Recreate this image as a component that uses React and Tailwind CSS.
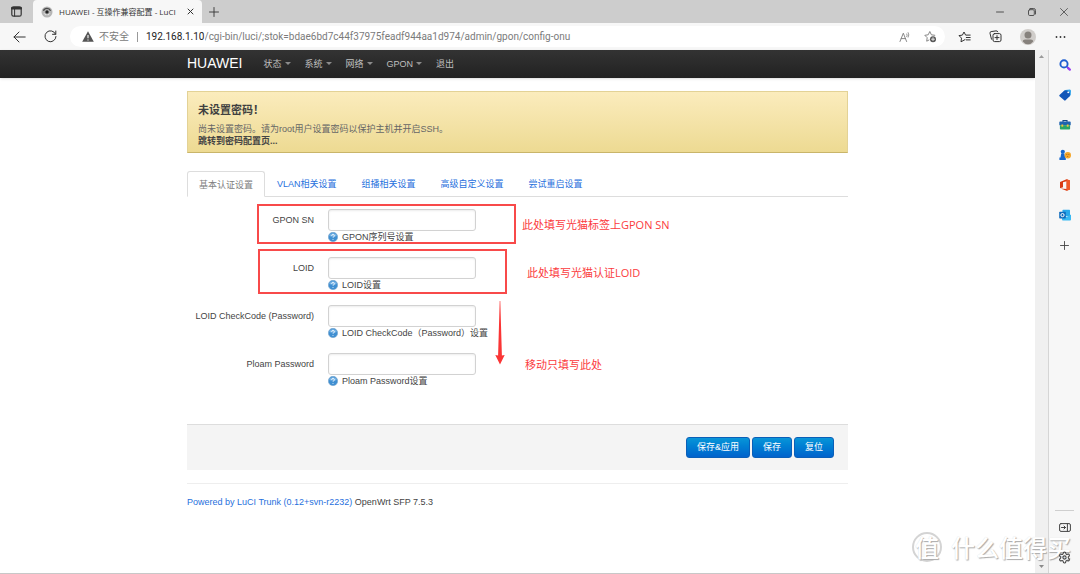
import { useState } from "react";

const NAV_ITEMS = [
  { label: "状态", dropdown: true },
  { label: "系统", dropdown: true },
  { label: "网络", dropdown: true },
  { label: "GPON", dropdown: true },
  { label: "退出", dropdown: false },
];

const TABS = ["基本认证设置", "VLAN相关设置", "组播相关设置", "高级自定义设置", "尝试重启设置"];

const FIELDS = [
  { id: "gpon-sn", label: "GPON SN", help: "GPON序列号设置" },
  { id: "loid", label: "LOID", help: "LOID设置" },
  { id: "loid-checkcode", label: "LOID CheckCode (Password)", help: "LOID CheckCode（Password）设置" },
  { id: "ploam-password", label: "Ploam Password", help: "Ploam Password设置" },
];

const SAVE_BTN =
  "h-[21px] rounded-[3px] border border-[#0a5fb8] bg-linear-to-b from-[#0a95d8] to-[#0262cc] px-[10px] text-[9px] leading-none text-white";

const STROKE = { fill: "none", stroke: "currentColor", strokeLinecap: "round", strokeLinejoin: "round" };

function TabBar() {
  return (
    <div className="flex h-[23px] items-end bg-[#cdcdcd] text-[#333]">
      <button aria-label="标签页操作" className="flex h-full w-[33px] items-center justify-center">
        <svg width="11" height="11" viewBox="0 0 11 11" {...STROKE}>
          <rect x="0.8" y="0.8" width="9.4" height="9.4" rx="1.8" strokeWidth="1.2" />
          <path d="M1 2.3h9" strokeWidth="2.4" />
          <path d="M3.6 3v7" strokeWidth="1" />
        </svg>
      </button>
      <div className="flex h-full w-[169px] items-center rounded-t-[4px] bg-[#f7f7f7] px-2">
        <svg width="12" height="12" viewBox="0 0 12 12" className="mr-[6px] shrink-0">
          <circle cx="6" cy="6" r="5.5" fill="#b5b5b5" />
          <path d="M2.4 4.8a3.9 3.9 0 0 1 7.2 0" fill="none" stroke="#4a4a4a" strokeWidth="1.3" />
          <circle cx="6" cy="6" r="1.7" fill="#222" />
          <path d="M6 7v3" stroke="#777" strokeWidth="1" />
          <path d="M3.2 7.4a3.2 3.2 0 0 0 5.6 0" fill="none" stroke="#eee" strokeWidth="1" />
        </svg>
        <span className="flex-1 whitespace-nowrap text-[8px]">HUAWEI - 互操作兼容配置 - LuCI</span>
        <button aria-label="关闭标签页">
          <svg width="7" height="7" viewBox="0 0 7 7" {...STROKE}>
            <path d="M1 1l5 5M6 1L1 6" strokeWidth="1" />
          </svg>
        </button>
      </div>
      <button aria-label="新建标签页" className="flex h-full w-6 items-center justify-center">
        <svg width="10" height="10" viewBox="0 0 10 10" {...STROKE}>
          <path d="M5 0.5v9M0.5 5h9" strokeWidth="0.9" />
        </svg>
      </button>
      <div className="ml-auto flex h-full items-center text-[#444]">
        <button aria-label="最小化" className="flex w-8 justify-center">
          <svg width="8" height="8" viewBox="0 0 8 8" {...STROKE}>
            <path d="M0.5 4h7" strokeWidth="0.9" />
          </svg>
        </button>
        <button aria-label="还原" className="flex w-8 justify-center">
          <svg width="8" height="8" viewBox="0 0 8 8" {...STROKE}>
            <rect x="0.5" y="1.7" width="5.8" height="5.8" rx="1.2" strokeWidth="0.9" />
            <path d="M2 0.5h3.6a1.9 1.9 0 0 1 1.9 1.9V6" strokeWidth="0.9" />
          </svg>
        </button>
        <button aria-label="关闭" className="flex w-8 justify-center">
          <svg width="8" height="8" viewBox="0 0 8 8" {...STROKE}>
            <path d="M0.5 0.5l7 7M7.5 0.5l-7 7" strokeWidth="0.8" />
          </svg>
        </button>
      </div>
    </div>
  );
}

function Toolbar() {
  const [path, setPath] = useState("/cgi-bin/luci/;stok=bdae6bd7c44f37975feadf944aa1d974/admin/gpon/config-onu");

  return (
    <div className="flex h-[27px] items-center bg-[#f7f7f7] text-[#333]">
      <button aria-label="后退" className="ml-[13px]">
        <svg width="13" height="12" viewBox="0 0 13 12" {...STROKE}>
          <path d="M12.2 6H1M6 1L1 6l5 5" strokeWidth="1" />
        </svg>
      </button>
      <button aria-label="刷新" className="ml-[18px]">
        <svg width="13" height="13" viewBox="0 0 13 13" {...STROKE}>
          <path d="M11.6 4.2A5.5 5.5 0 1 0 12 6.5M11.8 1v3.3H8.5" strokeWidth="1" />
        </svg>
      </button>
      <div className="ml-[13px] flex h-[21px] flex-1 items-center rounded-full bg-white pr-2 pl-3 font-[Roboto,'Noto_Sans_CJK_SC',sans-serif] text-[10px] text-[#7b7b7b]">
        <svg width="12" height="11" viewBox="0 0 12 11" className="shrink-0">
          <path d="M6 0.3L11.8 10.7H0.2z" fill="#555" />
          <path d="M6 4v3.3M6 8.4v1" stroke="#fff" strokeWidth="1.1" />
        </svg>
        <span className="ml-[5px] whitespace-nowrap">不安全</span>
        <span className="mx-2 h-[10px] w-px bg-[#999]" />
        <label htmlFor="address" className="text-[#222]">
          192.168.1.10
        </label>
        <input
          id="address"
          value={path}
          onChange={(e) => setPath(e.target.value)}
          className="min-w-0 flex-1 bg-transparent text-[#7b7b7b] outline-none"
        />
        <button aria-label="大声朗读">
          <svg width="12" height="12" viewBox="0 0 12 12" {...STROKE}>
            <path d="M1 10.5L4.3 2.2l3.3 8.3M2.2 7.6h4.2" strokeWidth="0.9" />
            <path d="M7.8 3a2.4 2.4 0 0 1 0 2.6M9.2 1.6a4.5 4.5 0 0 1 0 4.6" strokeWidth="0.8" />
          </svg>
        </button>
        <button aria-label="添加到收藏夹" className="ml-[13px]">
          <svg width="13" height="13" viewBox="0 0 13 13" {...STROKE}>
            <path d="M5 10L2.7 11.2l.5-3.5L.8 5.3l3.4-.5L5.8 1.5l1.6 3.3 3.4.5" strokeWidth="0.9" />
            <circle cx="9" cy="9.2" r="3" fill="#555" stroke="none" />
            <path d="M9 7.7v3M7.5 9.2h3" stroke="#fff" strokeWidth="0.8" />
          </svg>
        </button>
      </div>
      <button aria-label="收藏夹" className="ml-[13px]">
        <svg width="13" height="12" viewBox="0 0 13 12" {...STROKE}>
          <path d="M7 8.6L3 10.8l.5-3.7L1 4.6l3.4-.5L6 1l1.6 3.1h4.6M8.3 6.5h3.9M8.3 8.9h3.9" strokeWidth="1" />
        </svg>
      </button>
      <button aria-label="集锦" className="ml-[18px]">
        <svg width="13" height="13" viewBox="0 0 13 13" {...STROKE}>
          <rect x="4" y="3.6" width="8" height="8" rx="1.6" strokeWidth="1" />
          <path d="M8 5.6v4M6 7.6h4M2.5 9.2L1 3.4a1.5 1.5 0 0 1 1.1-1.8L7 .9a1.6 1.6 0 0 1 1.8.9" strokeWidth="1" />
        </svg>
      </button>
      <button aria-label="个人资料" className="ml-[18px]">
        <svg width="16" height="16" viewBox="0 0 16 16">
          <circle cx="8" cy="8" r="8" fill="#d0cdca" />
          <circle cx="8" cy="6" r="3.5" fill="#87827d" />
          <path d="M2.8 12.4c0-1.3 1-2 2.3-2h5.8c1.3 0 2.3.7 2.3 2A7.4 7.4 0 0 1 8 15.3a7.4 7.4 0 0 1-5.2-2.9z" fill="#87827d" />
        </svg>
      </button>
      <button aria-label="设置及其他" className="mr-[14px] ml-[19px]">
        <svg width="11" height="4" viewBox="0 0 11 4" fill="#333">
          <circle cx="1.5" cy="2" r="0.9" />
          <circle cx="5.5" cy="2" r="0.9" />
          <circle cx="9.5" cy="2" r="0.9" />
        </svg>
      </button>
    </div>
  );
}

const SIDE_APPS = [
  {
    name: "搜索",
    icon: (
      <>
        <circle cx="5" cy="4.9" r="3.6" fill="none" stroke="#1f5fd0" strokeWidth="1.9" />
        <path d="M7.8 7.6l1.8 1.7" stroke="#4b4fd8" strokeWidth="1.9" />
        <path d="M9.2 9.1l1.6 1.5" stroke="#9b3df0" strokeWidth="2.3" strokeLinecap="round" />
      </>
    ),
  },
  {
    name: "购物",
    icon: (
      <>
        <path d="M6.2.9L11 .6l1 .9-.2 4.6-2.2 2.2L4.2 3z" fill="#34a4ea" />
        <path d="M.5 6L5.4 1.5h3l2.5 2.6v3L6.6 11.3a1 1 0 0 1-1.4 0L.5 7.2a.9.9 0 0 1 0-1.2z" fill="#1257b8" />
        <circle cx="9.2" cy="3.3" r="0.9" fill="#fff" />
      </>
    ),
  },
  {
    name: "工具",
    icon: (
      <>
        <path d="M4 3V1.5h4V3" fill="none" stroke="#164a86" strokeWidth="1.1" />
        <rect x="0.3" y="2.6" width="11.4" height="4" rx="0.8" fill="#1d63ae" />
        <rect x="0.9" y="6.3" width="10.2" height="4.2" rx="0.8" fill="#27a567" />
        <rect x="2.4" y="5.5" width="1.8" height="2.2" fill="#f3c33a" />
        <rect x="7.8" y="5.5" width="1.8" height="2.2" fill="#f3c33a" />
      </>
    ),
  },
  {
    name: "游戏",
    icon: (
      <>
        <circle cx="3.8" cy="2.8" r="2.1" fill="#1667cf" />
        <path d="M2.2 4.6h3.2l.7 4h.7v2.3H.4V8.6h1.1z" fill="#1667cf" />
        <circle cx="8.8" cy="6.2" r="3.2" fill="#f5a72b" />
        <circle cx="7.8" cy="5.4" r=".5" fill="#a75a12" />
        <circle cx="9.9" cy="5.6" r=".5" fill="#a75a12" />
        <circle cx="8.7" cy="7.5" r=".5" fill="#a75a12" />
      </>
    ),
  },
  {
    name: "Microsoft 365",
    icon: (
      <>
        <path d="M7.6.2L11 1.4v9.2l-3.4 1.2-6-2.3 6 .5V2.2L4 3.2v5L1 9.3V2.9z" fill="#d83b14" />
        <path d="M7.6.2L11 1.4v9.2l-3.4 1.2z" fill="#ef5a2a" />
      </>
    ),
  },
  {
    name: "Outlook",
    icon: (
      <>
        <rect x="3.5" y=".8" width="7.5" height="6.5" rx=".6" fill="#28a8ea" />
        <path d="M3 5.5l4.5 2.6L12 5.5v5a.9.9 0 0 1-.9.9H3.9a.9.9 0 0 1-.9-.9z" fill="#39b9f2" />
        <rect x=".2" y="2.8" width="6.6" height="6.6" rx=".7" fill="#0f6cbd" />
        <circle cx="3.5" cy="6.1" r="1.6" fill="none" stroke="#fff" strokeWidth="1" />
      </>
    ),
  },
];

// sits above the watermark so its icons stay readable
function Sidebar() {
  return (
    <aside className="relative z-10 flex w-8 shrink-0 flex-col items-center border-l border-[#d5d5d5] text-[#444]">
      {SIDE_APPS.map((app) => (
        <button key={app.name} aria-label={app.name} className="flex h-[30px] w-full items-center justify-center">
          <svg width="12" height="12" viewBox="0 0 12 12">
            {app.icon}
          </svg>
        </button>
      ))}
      <button aria-label="添加" className="flex h-[30px] w-full items-center justify-center">
        <svg width="9" height="9" viewBox="0 0 9 9" {...STROKE}>
          <path d="M4.5 0.5v8M0.5 4.5h8" strokeWidth="0.9" />
        </svg>
      </button>
      <div className="mt-auto w-[19px] border-t border-[#cfcfcf]" />
      <button aria-label="隐藏边栏" className="flex h-8 w-full items-center justify-center">
        <svg width="12" height="9" viewBox="0 0 12 9" {...STROKE}>
          <rect x="0.6" y="0.6" width="10.8" height="7.8" rx="1.4" strokeWidth="1" />
          <path d="M8.4 0.8v7.4M2.5 4.5h4M5 3l1.5 1.5L5 6" strokeWidth="1" />
        </svg>
      </button>
      <button aria-label="设置" className="mb-px flex h-[29px] w-full items-center justify-center">
        <svg width="13" height="13" viewBox="0 0 24 24" {...STROKE} strokeWidth="2">
          <path d="M9.7 4.1a2.3 2.3 0 0 1 4.6 0 2.3 2.3 0 0 0 3.3 1.9 2.3 2.3 0 0 1 2.3 4 2.3 2.3 0 0 0 0 3.9 2.3 2.3 0 0 1-2.3 4 2.3 2.3 0 0 0-3.3 1.9 2.3 2.3 0 0 1-4.6 0 2.3 2.3 0 0 0-3.3-1.9 2.3 2.3 0 0 1-2.3-4 2.3 2.3 0 0 0 0-3.9 2.3 2.3 0 0 1 2.3-4 2.3 2.3 0 0 0 3.3-1.9" />
          <circle cx="12" cy="12" r="3" />
        </svg>
      </button>
    </aside>
  );
}

function Scrollbar() {
  return (
    <div className="flex w-[13px] shrink-0 flex-col items-center justify-between bg-[#f0f0f0] py-[5px]">
      <svg width="5" height="3" viewBox="0 0 5 3">
        <path d="M0 3L2.5 0 5 3z" fill="#9a9a9a" />
      </svg>
      <svg width="5" height="3" viewBox="0 0 5 3">
        <path d="M0 0l2.5 3L5 0z" fill="#8a8a8a" />
      </svg>
    </div>
  );
}

function HelpIcon() {
  return (
    <svg width="10" height="10" viewBox="0 0 10 10" className="shrink-0">
      <circle cx="5" cy="5" r="4.7" fill="#3f8fd2" stroke="#7fa9cc" strokeWidth="0.6" />
      <path d="M1.2 4a4 4 0 0 1 7.6 0c-2 1-5.6 1-7.6 0z" fill="#79b5e6" />
      <path d="M3.7 3.8a1.3 1.3 0 1 1 1.9 1.1c-.4.2-.6.4-.6.9M5 7v.8" fill="none" stroke="#fff" strokeWidth="0.9" />
    </svg>
  );
}

// red notes drawn over the form, positions are relative to the fieldset
function Annotations() {
  return (
    <div className="pointer-events-none absolute inset-0 font-['Open_Sans','Noto_Sans_CJK_SC',sans-serif] text-[11px] leading-4 whitespace-nowrap text-[#fb3b3e]">
      <div className="absolute top-[7px] left-[70px] h-[40px] w-[259px] border-2 border-[#f84a4a]" />
      <div className="absolute top-[52px] left-[71px] h-[45px] w-[249px] border-2 border-[#f84a4a]" />
      <span className="absolute top-[20px] left-[335px]">此处填写光猫标签上GPON SN</span>
      <span className="absolute top-[68px] left-[340px]">此处填写光猫认证LOID</span>
      <span className="absolute top-[160px] left-[338px]">移动只填写此处</span>
      <svg width="10" height="64" viewBox="0 0 10 64" className="absolute top-[104px] left-[308px]">
        <path d="M4.7 0h.6l1.6 54.5 2.8-.5L5 63.5.3 54l2.8.5z" fill="#fa3535" />
      </svg>
    </div>
  );
}

function Watermark() {
  return (
    <div className="pointer-events-none absolute right-[9px] bottom-[11px] flex items-center gap-[9px] font-['Noto_Sans_CJK_SC',sans-serif] leading-none font-medium text-white [text-shadow:1px_1px_1px_#aaa,0_0_1px_#ddd]">
      <span className="flex size-[30px] items-center justify-center rounded-full border-2 border-[#d4d4d4] text-[24px]">
        值
      </span>
      <span className="text-[24px]">什么值得买</span>
    </div>
  );
}

export default function App() {
  const [activeTab, setActiveTab] = useState(TABS[0]);

  return (
    <div className="relative flex min-h-screen flex-col overflow-hidden border-b border-[#c8c8c8] bg-[#f7f7f7] font-['Open_Sans','Noto_Sans_CJK_SC',sans-serif]">
      <TabBar />
      <Toolbar />

      <div className="flex flex-1">
        <div className="min-w-0 flex-1 bg-white font-['Liberation_Sans','Noto_Sans_CJK_SC',sans-serif] text-[9px] leading-3 text-[#444]">
          <header className="h-7 bg-linear-to-b from-[#333] to-[#222] shadow-sm">
            <div className="mx-auto flex h-full max-w-[661px] items-center pb-[2px]">
              <a href="#" className="mr-[21px] text-[14px] text-white">
                HUAWEI
              </a>
              <nav className="flex items-center gap-[14px] pt-px text-[#bfbfbf]">
                {NAV_ITEMS.map((item) => (
                  <a key={item.label} href="#" className="flex items-center gap-[3px]">
                    {item.label}
                    {item.dropdown && (
                      <svg width="6" height="3" viewBox="0 0 6 3">
                        <path d="M0 0h6L3 3z" fill="#8c8c8c" />
                      </svg>
                    )}
                  </a>
                ))}
              </nav>
            </div>
          </header>

          <main className="mx-auto max-w-[661px] pt-[13px]">
            <div className="border border-[#e3d296] border-b-[#c9b56a] bg-linear-to-b from-[#fbecbd] to-[#edda92] px-[10px] pt-[10px] pb-[5px]">
              <h4 className="mb-[5px] text-[11px] leading-4 font-bold text-[#404040]">未设置密码！</h4>
              <p className="text-[#666]">尚未设置密码。请为root用户设置密码以保护主机并开启SSH。</p>
              <a href="#" className="block font-bold text-[#444]">
                跳转到密码配置页...
              </a>
            </div>

            <div className="mt-[18px] flex border-b border-[#ddd]">
              {TABS.map((tab) => (
                <button
                  key={tab}
                  onClick={() => setActiveTab(tab)}
                  className={
                    tab === activeTab
                      ? "-mb-px h-[26px] rounded-t-[3px] border border-[#ddd] border-b-white bg-white px-[11px] pt-px text-[#808080]"
                      : "mr-px h-[25px] border border-transparent px-[11px] pt-px text-[#1f70dd]"
                  }
                >
                  {tab}
                </button>
              ))}
            </div>

            <form onSubmit={(e) => e.preventDefault()}>
              <div className="relative pt-3 pb-[23px]">
                {FIELDS.map((field) => (
                  <div key={field.id} className="flex h-12">
                    <label htmlFor={field.id} className="w-[127px] pt-[5px] text-right">
                      {field.label}
                    </label>
                    <div className="ml-[14px]">
                      <input
                        id={field.id}
                        type="text"
                        className="block h-[22px] w-[148px] rounded-[3px] border border-[#d2d2d2] bg-white px-1 shadow-[inset_0_1px_2px_#00000014]"
                      />
                      <div className="flex items-center gap-[4px]">
                        <HelpIcon />
                        <span>{field.help}</span>
                      </div>
                    </div>
                  </div>
                ))}
                <Annotations />
              </div>

              <div className="flex justify-end gap-[2px] border-t border-[#ddd] bg-[#f4f4f4] px-[14px] py-3">
                <button type="submit" className={SAVE_BTN}>
                  保存&amp;应用
                </button>
                <button type="button" className={SAVE_BTN}>
                  保存
                </button>
                <button type="reset" className={SAVE_BTN}>
                  复位
                </button>
              </div>
            </form>

            <footer className="mt-[13px] border-t border-[#eee] pt-3">
              <a href="#" className="text-[#1f70dd]">
                Powered by LuCI Trunk (0.12+svn-r2232)
              </a>{" "}
              OpenWrt SFP 7.5.3
            </footer>
          </main>
        </div>
        <Scrollbar />
        <Sidebar />
      </div>

      <Watermark />
    </div>
  );
}
